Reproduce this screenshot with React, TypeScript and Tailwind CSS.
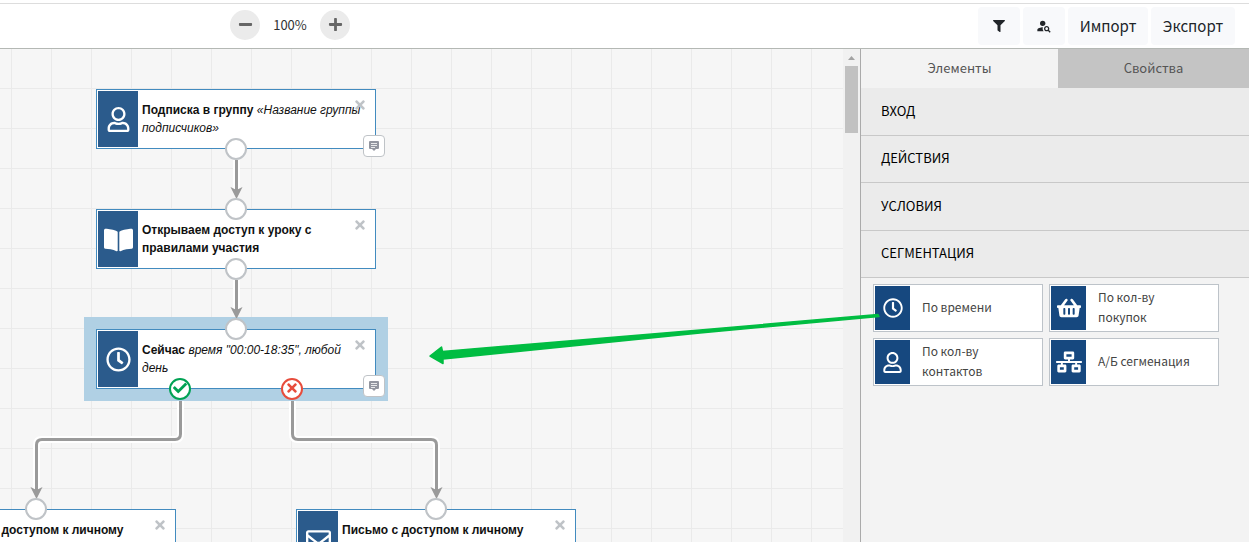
import type { ReactNode } from 'react';
import {
  FaBookOpen,
  FaCheck,
  FaFilter,
  FaMinus,
  FaNetworkWired,
  FaPlus,
  FaRegClock,
  FaRegEnvelope,
  FaRegUser,
  FaShoppingBasket,
  FaTimes,
} from 'react-icons/fa';
import { MdPersonSearch } from 'react-icons/md';

function ZoomButton({ label, children }: { label: string; children: ReactNode }) {
  return (
    <button
      type="button"
      aria-label={label}
      className="flex size-[30px] items-center justify-center rounded-full bg-[#ebebeb] pb-[2px] text-[#666]"
    >
      {children}
    </button>
  );
}

function ToolButton({ label, className, children }: { label?: string; className: string; children: ReactNode }) {
  return (
    <button
      type="button"
      aria-label={label}
      className={`flex h-[38px] items-center justify-center rounded bg-[#f8f9fb] text-[15px] text-[#212529] ${className}`}
    >
      {children}
    </button>
  );
}

function Header() {
  return (
    <header className="flex h-[49px] shrink-0 items-center border-b border-[#b4b8b4] bg-white pt-1 pr-[14px] pl-[230px]">
      <div className="flex items-center pb-[2px]">
        <ZoomButton label="Уменьшить">
          <FaMinus className="size-[15px]" />
        </ZoomButton>
        <span className="w-[60px] text-center text-[13px] text-[#333]">100%</span>
        <ZoomButton label="Увеличить">
          <FaPlus className="size-[15px]" />
        </ZoomButton>
      </div>
      <div className="ml-auto flex gap-[3px]">
        <ToolButton label="Фильтр" className="w-[42px]">
          <FaFilter className="size-3" />
        </ToolButton>
        <ToolButton label="Поиск контакта" className="w-[42px]">
          <MdPersonSearch className="size-4" />
        </ToolButton>
        <ToolButton className="w-20">Импорт</ToolButton>
        <ToolButton className="w-[84px]">Экспорт</ToolButton>
      </div>
    </header>
  );
}

function CommentIcon() {
  return (
    <svg viewBox="0 0 10 10" className="mb-px size-[10px]" aria-hidden="true">
      <path d="M1 0h8a1 1 0 0 1 1 1v6a1 1 0 0 1-1 1H7L5 10 3 8H1a1 1 0 0 1-1-1V1a1 1 0 0 1 1-1Z" fill="#92959f" />
      <path d="M2 2.500h6M2 4.500h6M2 6.500h4" stroke="#fff" strokeWidth="0.8" />
    </svg>
  );
}

const portBase = 'absolute flex size-[22px] items-center justify-center rounded-full border-2 bg-white';

interface NodeProps {
  place: string;
  icon: ReactNode;
  title: string;
  detail?: string;
  input?: boolean;
  output?: 'single' | 'branch';
  comment?: boolean;
}

function FlowNode({ place, icon, title, detail, input, output, comment }: NodeProps) {
  return (
    <article className={`absolute flex h-[60px] w-[280px] border border-[#428bbf] bg-white p-px ${place}`}>
      <div className="flex w-10 shrink-0 items-center justify-center bg-[#2b5b8c] pt-px text-white">{icon}</div>
      <p className="pt-[10px] pr-3 pl-1 font-['Liberation_Sans',Arial,sans-serif] text-[12px] leading-[18px] text-[#111]">
        <strong>{title}</strong> {detail && <em>{detail}</em>}
      </p>
      <button type="button" aria-label="Удалить" className="absolute top-2 right-2 text-[#bfc3c7]">
        <FaTimes className="size-[14px]" />
      </button>
      {input && <span className={`${portBase} -top-3 left-[128px] border-[#bfc3c7]`} />}
      {output === 'single' && <span className={`${portBase} -bottom-3 left-[128px] border-[#bfc3c7]`} />}
      {output === 'branch' && (
        <>
          <span className={`${portBase} -bottom-3 left-[72px] border-[#00a254] pb-[2px] text-[#00a254]`}>
            <FaCheck className="size-[14px]" />
          </span>
          <span className={`${portBase} -bottom-3 left-[184px] border-[#e74c3c] pb-[2px] text-[#e74c3c]`}>
            <FaTimes className="size-[14px]" />
          </span>
        </>
      )}
      {comment && (
        <button
          type="button"
          aria-label="Комментарий"
          className="absolute -right-[10px] -bottom-[9px] flex size-[22px] items-center justify-center rounded border border-[#bfc3c7] bg-white"
        >
          <CommentIcon />
        </button>
      )}
    </article>
  );
}

const links = [
  'M236.5 111V143',
  'M236.5 231V263',
  'M180.5 352V385Q180.5 390.5 175 390.5H42Q36.5 390.5 36.5 396V443',
  'M292.5 352V385Q292.5 390.5 298 390.5H431Q436.5 390.5 436.5 396V443',
];
const arrowHeads = [
  [236.5, 150],
  [236.5, 270],
  [36.5, 450],
  [436.5, 450],
];

function Connectors() {
  return (
    <svg className="absolute inset-0 size-full" fill="none" aria-hidden="true">
      {links.map((d) => (
        <g key={d}>
          <path d={d} stroke="#fff" strokeWidth="7" />
          <path d={d} stroke="#9a9a9a" strokeWidth="3" />
        </g>
      ))}
      {arrowHeads.map(([x, y]) => (
        <path key={`${x}-${y}`} d={`M${x} ${y}l-6-12 6 3 6-3Z`} fill="#9a9a9a" />
      ))}
    </svg>
  );
}

function Canvas() {
  return (
    <main className="relative min-w-0 flex-1 overflow-hidden bg-[#f6f6f6] bg-[linear-gradient(to_right,#eaeaea_1px,transparent_1px),linear-gradient(to_bottom,#eaeaea_1px,transparent_1px)] bg-[length:40px_40px] bg-[position:11px_39px]">
      <div className="absolute top-[268px] left-[84px] h-[84px] w-[304px] bg-[#b0d0e4]" />
      <Connectors />
      <FlowNode
        place="left-24 top-10"
        icon={<FaRegUser className="size-[25px]" />}
        title="Подписка в группу"
        detail="«Название группы подписчиков»"
        output="single"
        comment
      />
      <FlowNode
        place="left-24 top-40"
        icon={<FaBookOpen className="h-[26px] w-[29px]" />}
        title="Открываем доступ к уроку с правилами участия"
        input
        output="single"
      />
      <FlowNode
        place="left-24 top-[280px]"
        icon={<FaRegClock className="size-[25px]" />}
        title="Сейчас"
        detail={'время "00:00-18:35", любой день'}
        input
        output="branch"
        comment
      />
      <FlowNode
        place="-left-[104px] top-[460px]"
        icon={<FaRegEnvelope className="size-[25px]" />}
        title="Письмо с доступом к личному"
        input
      />
      <FlowNode
        place="left-[296px] top-[460px]"
        icon={<FaRegEnvelope className="size-[25px]" />}
        title="Письмо с доступом к личному"
        input
      />
    </main>
  );
}

function ScrollTrack() {
  return (
    <div className="flex w-[17px] shrink-0 flex-col items-center bg-[#f1f1f1]" aria-hidden="true">
      <svg viewBox="0 0 17 17" className="size-[17px]">
        <path d="M5 11h7L8.500 7Z" fill="#a3a3a3" />
      </svg>
      <div className="h-[67px] w-[13px] bg-[#c1c1c1]" />
    </div>
  );
}

const sections = ['ВХОД', 'ДЕЙСТВИЯ', 'УСЛОВИЯ', 'СЕГМЕНТАЦИЯ'];

const elements = [
  { label: 'По времени', icon: <FaRegClock className="size-5" /> },
  { label: 'По кол-ву покупок', icon: <FaShoppingBasket className="size-6" /> },
  { label: 'По кол-ву контактов', icon: <FaRegUser className="size-[21px]" /> },
  { label: 'А/Б сегменация', icon: <FaNetworkWired className="size-[26px]" /> },
];

function Sidebar() {
  return (
    <aside className="w-[389px] shrink-0 border-l border-[#aaa] bg-[#f3f3f3]">
      <div role="tablist" className="flex h-[39px] text-[13px] text-[#555]">
        <button type="button" role="tab" aria-selected="true" className="w-[197px] pb-[2px]">
          Элементы
        </button>
        <button type="button" role="tab" aria-selected="false" className="flex-1 bg-[#c4c4c4] pb-[2px]">
          Свойства
        </button>
      </div>
      <div className="grid h-[190px] grid-rows-4">
        {sections.map((name) => (
          <button
            key={name}
            type="button"
            className="border-b border-[#c8c8c8] bg-[#ebebeb] pb-[2px] pl-5 text-left text-[13px] text-black"
          >
            {name}
          </button>
        ))}
      </div>
      <div className="grid grid-cols-[170px_170px] gap-[6px] px-3 py-[6px]">
        {elements.map(({ label, icon }) => (
          <button
            key={label}
            type="button"
            className="flex h-12 items-stretch border border-[#bdc3c9] bg-white p-px text-left"
          >
            <span className="flex w-[35px] shrink-0 items-center justify-center bg-[#16487f] text-white">{icon}</span>
            <span className="self-center pr-5 pb-[2px] pl-3 text-[12px] leading-5 text-[#444]">{label}</span>
          </button>
        ))}
      </div>
    </aside>
  );
}

export default function App() {
  return (
    <div className="relative flex h-screen flex-col overflow-hidden bg-white font-['Noto_Sans_CJK_SC',sans-serif]">
      <div className="absolute inset-x-0 top-[3px] h-px bg-[#ddd]" />
      <Header />
      <div className="flex min-h-0 flex-1">
        <Canvas />
        <ScrollTrack />
        <Sidebar />
      </div>
      <svg
        viewBox="0 0 452 52"
        className="pointer-events-none absolute top-[313px] left-[429px] h-[52px] w-[452px]"
        aria-hidden="true"
      >
        <path
          d="M1 43 12.500 34 13.500 38.500 271 17 449 1.500 450 3.500 271 20 14 46 14 50.500Z"
          fill="#00bd42"
          stroke="#00bd42"
          strokeWidth="1.500"
          strokeLinejoin="round"
        />
      </svg>
    </div>
  );
}
